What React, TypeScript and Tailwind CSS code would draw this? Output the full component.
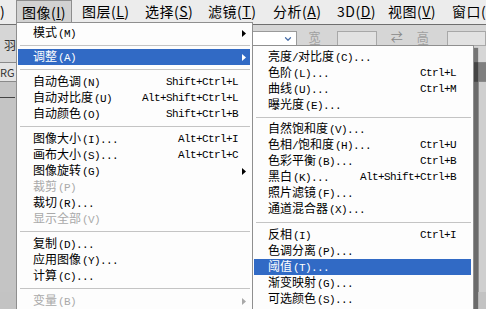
import { ChevronDown } from 'lucide-react'

type Row =
  | { sep: true; h: number }
  | { sep?: false; label: string; sc?: string; arrow?: boolean; active?: boolean; disabled?: boolean }

const mainRows: Row[] = [
  { label: '模式(M)', arrow: true },
  { sep: true, h: 8 },
  { label: '调整(A)', arrow: true, active: true },
  { sep: true, h: 9 },
  { label: '自动色调(N)', sc: 'Shift+Ctrl+L' },
  { label: '自动对比度(U)', sc: 'Alt+Shift+Ctrl+L' },
  { label: '自动颜色(O)', sc: 'Shift+Ctrl+B' },
  { sep: true, h: 9 },
  { label: '图像大小(I)...', sc: 'Alt+Ctrl+I' },
  { label: '画布大小(S)...', sc: 'Alt+Ctrl+C' },
  { label: '图像旋转(G)', arrow: true },
  { label: '裁剪(P)', disabled: true },
  { label: '裁切(R)...' },
  { label: '显示全部(V)', disabled: true },
  { sep: true, h: 9 },
  { label: '复制(D)...' },
  { label: '应用图像(Y)...' },
  { label: '计算(C)...' },
  { sep: true, h: 9 },
  { label: '变量(B)', arrow: true, disabled: true },
]

const subRows: Row[] = [
  { label: '亮度/对比度(C)...' },
  { label: '色阶(L)...', sc: 'Ctrl+L' },
  { label: '曲线(U)...', sc: 'Ctrl+M' },
  { label: '曝光度(E)...' },
  { sep: true, h: 8 },
  { label: '自然饱和度(V)...' },
  { label: '色相/饱和度(H)...', sc: 'Ctrl+U' },
  { label: '色彩平衡(B)...', sc: 'Ctrl+B' },
  { label: '黑白(K)...', sc: 'Alt+Shift+Ctrl+B' },
  { label: '照片滤镜(F)...' },
  { label: '通道混合器(X)...' },
  { sep: true, h: 10 },
  { label: '反相(I)', sc: 'Ctrl+I' },
  { label: '色调分离(P)...' },
  { label: '阈值(T)...', active: true },
  { label: '渐变映射(G)...' },
  { label: '可选颜色(S)...' },
]

const mono = "font-['Liberation_Mono',monospace] text-[11px] tracking-[-0.6px]"

function Arrow({ color }: { color: string }) {
  return (
    <svg width="4" height="7" viewBox="0 0 4 7">
      <polygon points="0,0 4,3.5 0,7" fill={color} />
    </svg>
  )
}

// CJK part in the sans face, the "(X)..." tail in a half-width mono face like SimSun
function Label({ text }: { text: string }) {
  const i = text.indexOf('(')
  const cjk = text.slice(0, i)
  const tail = text.slice(i)
  return (
    <span className="flex-1 whitespace-nowrap">
      {cjk.split('/').map((part, k) => (
        <span key={k}>
          {k > 0 && <span className={mono}>/</span>}
          {part}
        </span>
      ))}
      <span className={`${mono} ml-[1px]`}>{tail}</span>
    </span>
  )
}

function MenuRows({ rows, pl, pr, arrows }: { rows: Row[]; pl: string; pr: string; arrows: boolean }) {
  return (
    <>
      {rows.map((r, i) =>
        r.sep ? (
          <div key={i} className="flex items-center pl-[3px] pr-[2px]" style={{ height: r.h }}>
            <div className="h-px w-full bg-[#c4c4c4]" />
          </div>
        ) : (
          <div
            key={i}
            className={`ml-px mr-[2px] flex h-[16px] items-center ${pl} ${
              r.active ? 'bg-[#316ac5] text-white' : r.disabled ? 'text-[#a9a9a9]' : 'text-black'
            }`}
          >
            <Label text={r.label} />
            {r.sc && <span className={`whitespace-nowrap ${mono} ${arrows ? '' : pr}`}>{r.sc}</span>}
            {arrows && (
              <span className="flex w-[12px] justify-center">
                {r.arrow && <Arrow color={r.active ? '#ffffff' : r.disabled ? '#a9a9a9' : '#000000'} />}
              </span>
            )}
          </div>
        )
      )}
    </>
  )
}

const bar = [
  { label: '图像', key: 'I', w: 'w-[56px]', open: true },
  { label: '图层', key: 'L', w: 'w-[63px]' },
  { label: '选择', key: 'S', w: 'w-[63px]' },
  { label: '滤镜', key: 'T', w: 'w-[65px]' },
  { label: '分析', key: 'A', w: 'w-[64px]' },
  { label: '3D', key: 'D', w: 'w-[51px]' },
  { label: '视图', key: 'V', w: 'w-[64px]' },
  { label: '窗口', key: 'W', w: 'w-[60px]' },
]

export default function App() {
  return (
    <div className="relative h-[309px] w-[486px] overflow-hidden bg-[#c3c3c3] font-['Noto_Sans_CJK_SC',sans-serif] text-[12px] leading-none">
      {/* menu bar */}
      <div className="flex h-[25px] items-start overflow-hidden border-b border-[#6f6f6f] bg-[#ececec] text-[14px] tracking-[0.5px] text-black">
        <span className="flex h-[22px] w-[16px] shrink-0 items-center">)</span>
        {bar.map((b, i) => (
          <span
            key={b.key}
            className={`flex h-[22px] shrink-0 items-center whitespace-nowrap ${b.w} ${
              b.open ? 'border border-b-0 border-[#8d8d8d] bg-[#d2d2d2] pl-[5px]' : 'pl-[6px]'
            } ${i === 1 ? 'ml-[4px]' : ''}`}
          >
            {b.label}(<span className="underline">{b.key}</span>)
          </span>
        ))}
      </div>

      {/* options bar */}
      <div className="flex h-[37px] items-start bg-[#d6d6d6] pt-[6px] text-[12px]">
        <span className="ml-[4px] mt-[8px] w-[246px] text-[#333]">羽</span>
        <div className="flex h-[15px] w-[56px] items-center justify-end border border-[#9a9a9a] bg-white pr-[3px]">
          <ChevronDown size={10} strokeWidth={3} color="#4a6fa8" />
        </div>
        <span className="ml-[12px] text-[#a0a0a0]">宽度:</span>
        <div className="ml-[2px] h-[15px] w-[41px] border border-[#a8a8a8] bg-[#e2e2e2]" />
        <span className="ml-[14px] text-[#888]">⇄</span>
        <span className="ml-[14px] text-[#a0a0a0]">高度:</span>
        <div className="ml-[4px] h-[15px] w-[40px] border border-[#a8a8a8] bg-[#e2e2e2]" />
      </div>

      {/* tab row */}
      <div className="flex h-[20px] items-center border-y border-[#8a8a8a] bg-[#7f7f7f]">
        <span className="flex h-full w-[16px] items-center bg-[#e4e4e4] text-[11px] text-[#333]">RG</span>
      </div>

      {/* workspace */}
      <div className="flex h-[210px]">
        <div className="w-[16px] bg-[#c4c4c4] pt-[15px]">
          <div className="h-px w-[15px] bg-[#444]" />
        </div>
        <div className="flex-1 bg-[#c4c4c4]" />
        <div className="w-[8px] border-l border-[#9a9a9a] bg-[#cfcfcf]" />
      </div>

      {/* image menu */}
      <div className="absolute left-[16px] top-[22px] h-[300px] w-[237px] border border-[#8f8f8f] bg-[#fdfdfd] pt-[2px]">
        <MenuRows rows={mainRows} pl="pl-[15px]" pr="" arrows />
      </div>

      {/* adjustments submenu */}
      <div className="absolute left-[252px] top-[45px] h-[270px] w-[222px] border border-[#8f8f8f] bg-[#fdfdfd] pt-[3px] shadow-[4px_3px_1px_rgba(0,0,0,0.45)]">
        <MenuRows rows={subRows} pl="pl-[14px]" pr="pr-[15px]" arrows={false} />
      </div>
    </div>
  )
}
